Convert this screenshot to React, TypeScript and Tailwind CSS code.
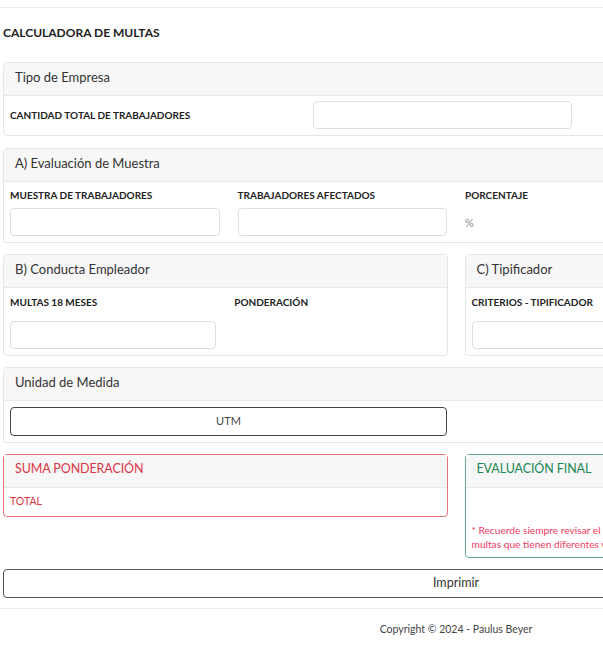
import React from "react"

const font = { fontFamily: "Lato, 'Open Sans', sans-serif" }

const Card = ({
  title,
  children,
  tone = "default",
  className = "",
}: {
  title: string
  children: React.ReactNode
  tone?: "default" | "danger" | "success"
  className?: string
}) => {
  const border =
    tone === "danger" ? "border-[#e8707b]" : tone === "success" ? "border-[#5fae87]" : "border-[#e6e6e6]"
  const head =
    tone === "danger"
      ? "text-[#dc3545] text-[12.5px] tracking-[-0.1px]"
      : tone === "success"
        ? "text-[#198754] text-[12.5px] tracking-[-0.1px]"
        : "text-[#333] text-[13px]"
  return (
    <div className={`rounded-[4px] border bg-white ${border} ${className}`}>
      <div className="flex h-[33px] items-center border-b border-[#e8e8e8] bg-[#f7f7f7] px-[11px] pb-[3px]">
        <span className={head}>{title}</span>
      </div>
      {children}
    </div>
  )
}

const Label = ({ children }: { children: React.ReactNode }) => (
  <div className="text-[10px] font-bold leading-[14px] text-[#222]">{children}</div>
)

const Input = ({ className = "" }: { className?: string }) => (
  <input type="text" className={`h-[28px] rounded-[4px] border border-[#dcdfe3] bg-white px-2 outline-none ${className}`} />
)

export default function App() {
  return (
    <div className="min-h-[645px] w-full overflow-hidden bg-white" style={font}>
      <div className="w-[912px]">
        <div className="h-[8px] border-b border-[#ececec]" />

        <div className="pl-[3px] pt-[15px] text-[12px] font-bold leading-[20px] text-[#222]">CALCULADORA DE MULTAS</div>

        <div className="mt-[19px] flex flex-col pl-[3px] pr-[3px]">
          <Card title="Tipo de Empresa">
            <div className="flex items-center px-[6px] pb-[6px] pt-[5px]">
              <div className="w-[303px]">
                <Label>CANTIDAD TOTAL DE TRABAJADORES</Label>
              </div>
              <Input className="w-[259px]" />
            </div>
          </Card>

          <Card title="A) Evaluación de Muestra" className="mt-[12px]">
            <div className="grid grid-cols-4 gap-x-[18px] px-[6px] pb-[6px] pt-[6px]">
              <div className="flex flex-col gap-[6px]">
                <Label>MUESTRA DE TRABAJADORES</Label>
                <Input className="w-full" />
              </div>
              <div className="flex flex-col gap-[6px]">
                <Label>TRABAJADORES AFECTADOS</Label>
                <Input className="w-full" />
              </div>
              <div className="flex flex-col gap-[6px]">
                <Label>PORCENTAJE</Label>
                <div className="flex h-[28px] items-center pt-[2px] text-[11px] text-[#888]">%</div>
              </div>
              <div />
            </div>
          </Card>

          <div className="mt-[11px] grid grid-cols-2 gap-x-[17px]">
            <Card title="B) Conducta Empleador">
              <div className="grid grid-cols-2 gap-x-[18px] px-[6px] pb-[6px] pt-[7px]">
                <div className="flex flex-col gap-[12px]">
                  <Label>MULTAS 18 MESES</Label>
                  <Input className="w-full" />
                </div>
                <div className="flex flex-col gap-[12px]">
                  <Label>PONDERACIÓN</Label>
                </div>
              </div>
            </Card>
            <Card title="C) Tipificador">
              <div className="grid grid-cols-2 gap-x-[18px] px-[6px] pb-[6px] pt-[7px]">
                <div className="flex flex-col gap-[12px]">
                  <Label>CRITERIOS - TIPIFICADOR</Label>
                  <Input className="w-full" />
                </div>
              </div>
            </Card>
          </div>

          <Card title="Unidad de Medida" className="mt-[11px]">
            <div className="grid grid-cols-2 gap-x-[18px] px-[6px] pb-[6px] pt-[6px]">
              <button className="h-[29px] rounded-[4px] border border-[#444] bg-white text-[11px] text-[#444]">UTM</button>
            </div>
          </Card>

          <div className="mt-[11px] grid grid-cols-2 items-start gap-x-[17px]">
            <Card title="SUMA PONDERACIÓN" tone="danger">
              <div className="flex h-[28px] items-center px-[6px] text-[10.5px] text-[#dc3545]">TOTAL</div>
            </Card>
            <Card title="EVALUACIÓN FINAL" tone="success">
              <div className="px-[6px] pb-[6px] pt-[35px] text-[10.2px] leading-[14px] text-[#f03a5f]">
                <p className="whitespace-nowrap">* Recuerde siempre revisar el tipificador, ya que existen</p>
                <p className="whitespace-nowrap">multas que tienen diferentes valores según el caso.</p>
              </div>
            </Card>
          </div>

          <button className="mt-[11px] h-[29px] w-full rounded-[4px] border border-[#555] bg-white text-[12.5px] text-[#333]">
            Imprimir
          </button>
        </div>

        <div className="mt-[10px] border-t border-[#ececec] pt-[12px] text-center text-[10.5px] leading-[16px] text-[#444]">
          Copyright © 2024 - Paulus Beyer
        </div>
      </div>
    </div>
  )
}
